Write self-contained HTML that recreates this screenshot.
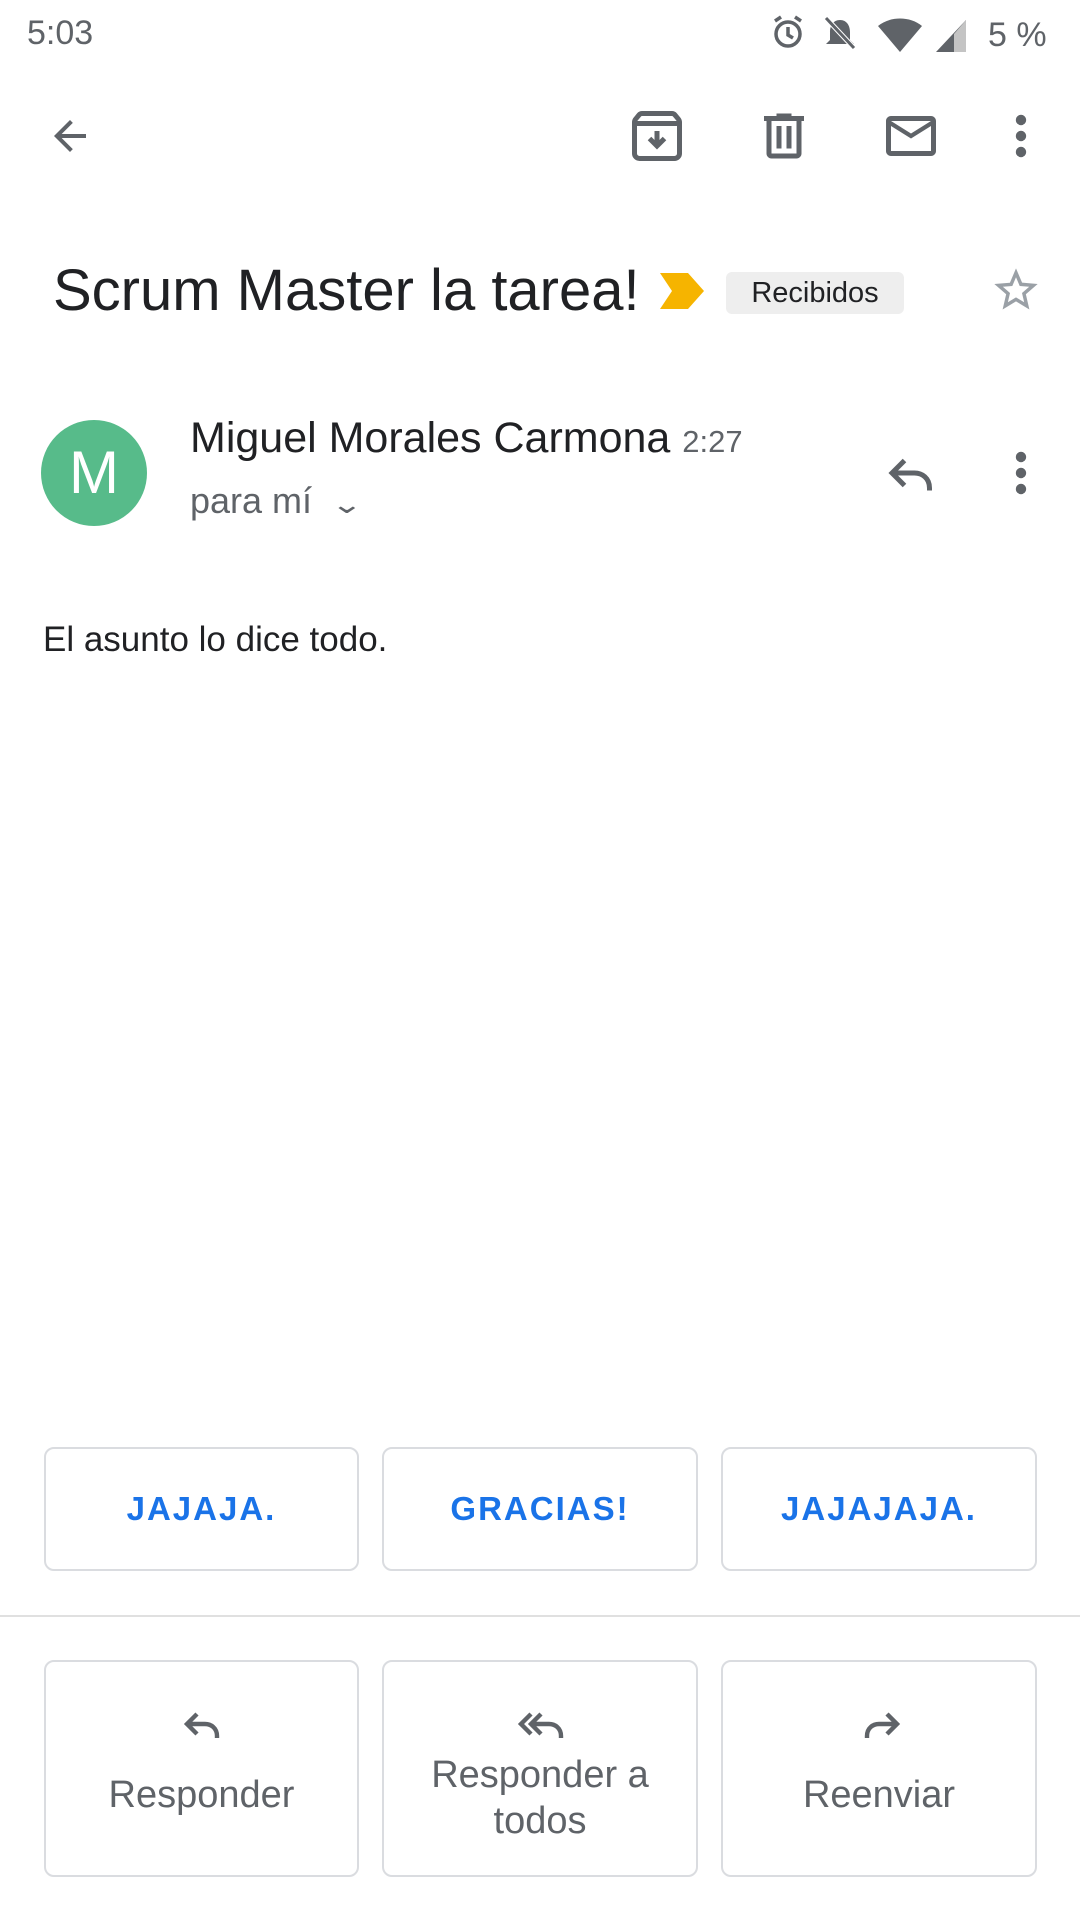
<!DOCTYPE html>
<html><head><meta charset="utf-8"><style>
*{margin:0;padding:0;box-sizing:border-box}
body{width:1080px;height:1920px;background:#fff;position:relative;overflow:hidden;font-family:"Liberation Sans",sans-serif;color:#202124}
.a{position:absolute}
.btn{position:absolute;border:2px solid #dadce0;border-radius:10px;background:#fff}
.sr{top:1447px;height:124px;color:#1a73e8;font-size:33px;font-weight:bold;letter-spacing:2px;display:flex;align-items:center;justify-content:center}
.ac{top:1660px;height:217px;color:#5f6368;font-size:38px;text-align:center}
</style></head><body>
<div class="a" style="left:27px;top:14px;font-size:34px;color:#5f6368">5:03</div>
<svg class="a" style="left:768px;top:12px" width="280" height="44" viewBox="0 0 280 44">
<g fill="none" stroke="#5f6368" stroke-width="3.5"><circle cx="20" cy="22" r="12"/><path d="M20 15v8l5 3M7 9l6-4M33 9l-6-4"/></g>
<path d="M72 8c-7 0-10 6-10 12v8l-4 4h28l-4-4v-8c0-6-3-12-10-12z" fill="#5f6368"/><path d="M58 6l28 30" stroke="#fff" stroke-width="5"/><path d="M58 6l28 30" stroke="#5f6368" stroke-width="3"/>
<path d="M110 14c12-10 32-10 44 0l-22 26z" fill="#5f6368"/>
<path d="M198 8v32h-30z" fill="#5f6368"/><path d="M198 8v32h-12v-18z" fill="#c4c4c4"/>
<text x="220" y="34" font-size="34" fill="#5f6368" font-family="Liberation Sans">5 %</text></svg>
<svg class="a" style="left:46px;top:112px" width="48" height="48" viewBox="0 0 24 24"><path d="M20 11H7.83l5.59-5.59L12 4l-8 8 8 8 1.41-1.41L7.83 13H20v-2z" fill="#5f6368"/></svg>
<svg class="a" style="left:627px;top:106px" width="60" height="60" viewBox="0 0 24 24"><path d="M20.54 5.23l-1.39-1.68C18.88 3.21 18.47 3 18 3H6c-.47 0-.88.21-1.160.55L3.46 5.23C3.17 5.57 3 6.02 3 6.5V19c0 1.1.9 2 2 2h14c1.1 0 2-.9 2-2V6.5c0-.48-.17-.93-.46-1.27z" fill="none" stroke="#5f6368" stroke-width="2"/><path d="M3.5 7h17" stroke="#5f6368" stroke-width="2"/><path d="M12 10v5M9 13l3 3 3-3" stroke="#5f6368" stroke-width="2" fill="none"/></svg>
<svg class="a" style="left:754px;top:106px" width="60" height="60" viewBox="0 0 24 24"><path d="M15 4V3H9v1H4v2h1v13c0 1.1.9 2 2 2h10c1.1 0 2-.9 2-2V6h1V4h-5zm2 15H7V6h10v13zM9 8h2v9H9zm4 0h2v9h-2z" fill="#5f6368"/></svg>
<svg class="a" style="left:881px;top:106px" width="60" height="60" viewBox="0 0 24 24"><path d="M22 6c0-1.1-.9-2-2-2H4c-1.1 0-2 .9-2 2v12c0 1.1.9 2 2 2h16c1.1 0 2-.9 2-2V6zm-2 0l-8 5-8-5h16zm0 12H4V8l8 5 8-5v10z" fill="#5f6368"/></svg>
<svg class="a" style="left:1001px;top:112px" width="40" height="48" viewBox="0 0 20 24"><circle cx="10" cy="4" r="2.6" fill="#5f6368"/><circle cx="10" cy="12" r="2.6" fill="#5f6368"/><circle cx="10" cy="20" r="2.6" fill="#5f6368"/></svg>
<div class="a" style="left:53px;top:257px;font-size:58px;white-space:nowrap">Scrum Master la tarea!</div>
<svg class="a" style="left:660px;top:273px" width="46" height="36" viewBox="0 0 46 36"><path d="M0 0h28l16 18-16 18H0l12-18z" fill="#f6b400"/></svg>
<div class="a" style="left:726px;top:272px;width:178px;height:42px;background:#eeeeee;border-radius:6px;font-size:29px;line-height:42px;text-align:center;color:#202124">Recibidos</div>
<svg class="a" style="left:990px;top:264px" width="52" height="52" viewBox="0 0 24 24"><path d="M22 9.24l-7.19-.62L12 2 9.19 8.630 2 9.24l5.46 4.73L5.82 21 12 17.27 18.18 21l-1.63-7.03L22 9.24zM12 15.4l-3.76 2.27 1-4.28-3.32-2.88 4.38-.38L12 6.1l1.71 4.04 4.38.38-3.32 2.88 1 4.28L12 15.4z" fill="#9aa0a6"/></svg>
<div class="a" style="left:41px;top:420px;width:106px;height:106px;border-radius:50%;background:#57bb8a;color:#fff;font-size:60px;line-height:106px;text-align:center">M</div>
<div class="a" style="left:190px;top:414px;font-size:43px;white-space:nowrap">Miguel Morales Carmona <span style="font-size:31px;color:#5f6368">2:27</span></div>
<div class="a" style="left:190px;top:480px;font-size:36px;color:#5f6368">para mí <span style="font-size:26px;display:inline-block;transform:scaleX(1.5);margin-left:14px">&#8964;</span></div>
<svg class="a" style="left:882px;top:443px" width="60" height="60" viewBox="0 0 24 24"><path d="M9 7L4 12l5 5M4 12h9c3 0 6 2 6 6v1" fill="none" stroke="#5f6368" stroke-width="2"/></svg>
<svg class="a" style="left:1001px;top:449px" width="40" height="48" viewBox="0 0 20 24"><circle cx="10" cy="4" r="2.6" fill="#5f6368"/><circle cx="10" cy="12" r="2.6" fill="#5f6368"/><circle cx="10" cy="20" r="2.6" fill="#5f6368"/></svg>
<div class="a" style="left:43px;top:620px;font-size:35px">El asunto lo dice todo.</div>
<div class="btn sr" style="left:44px;width:315px">JAJAJA.</div>
<div class="btn sr" style="left:382px;width:316px">GRACIAS!</div>
<div class="btn sr" style="left:721px;width:316px">JAJAJAJA.</div>
<div class="a" style="left:0;top:1615px;width:1080px;height:2px;background:#e0e0e0"></div>
<div class="btn ac" style="left:44px;width:315px">
<svg style="position:absolute;left:133px;top:38px" width="48" height="48" viewBox="0 0 24 24"><path d="M9 7L4 12l5 5M4 12h9c3 0 6 2 6 6v1" fill="none" stroke="#5f6368" stroke-width="2.2"/></svg>
<div style="position:absolute;left:0;right:0;top:112px">Responder</div></div>
<div class="btn ac" style="left:382px;width:316px">
<svg style="position:absolute;left:131px;top:38px" width="52" height="48" viewBox="0 0 26 24"><path d="M8 7L3 12l5 5M13 7l-5 5 5 5M8 12h9c3 0 6 2 6 6v1" fill="none" stroke="#5f6368" stroke-width="2.2"/></svg>
<div style="position:absolute;left:0;right:0;top:90px;line-height:46px">Responder a<br>todos</div></div>
<div class="btn ac" style="left:721px;width:316px">
<svg style="position:absolute;left:134px;top:38px" width="48" height="48" viewBox="0 0 24 24"><path d="M15 7l5 5-5 5M20 12h-9c-3 0-6 2-6 6v1" fill="none" stroke="#5f6368" stroke-width="2.2"/></svg>
<div style="position:absolute;left:0;right:0;top:112px">Reenviar</div></div>
</body></html>
